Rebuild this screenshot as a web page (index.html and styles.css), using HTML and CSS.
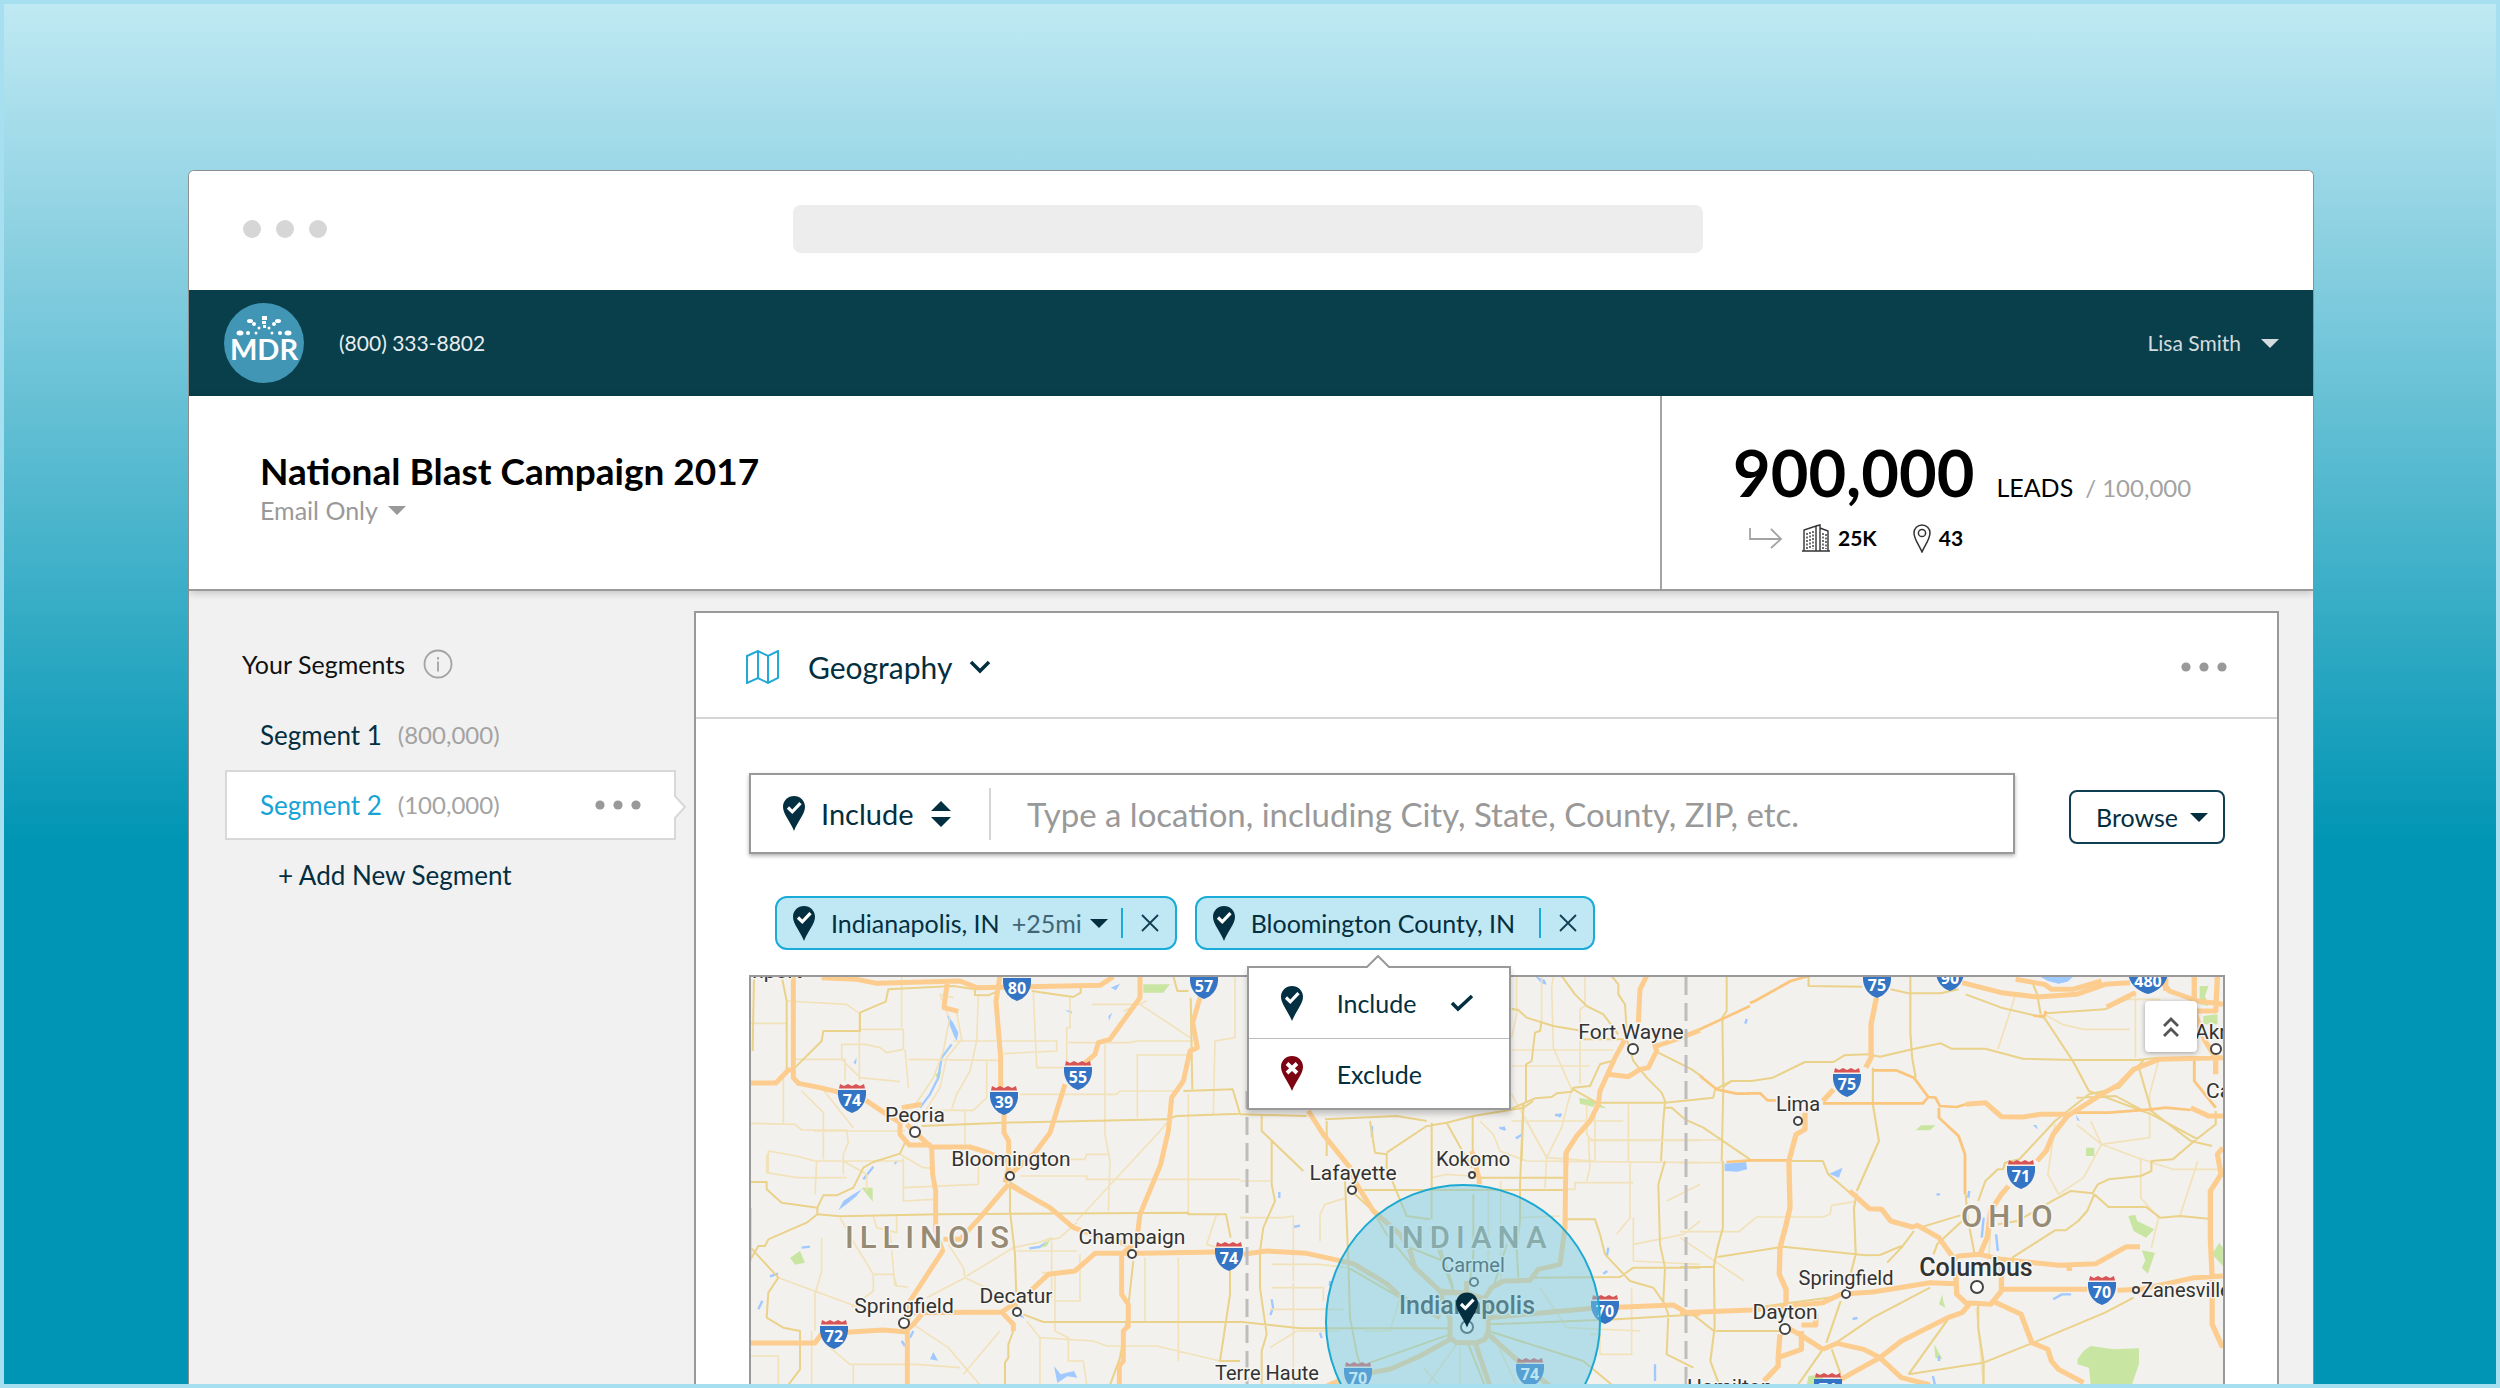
FILE: index.html
```html
<!DOCTYPE html>
<html lang="en">
<head>
<meta charset="utf-8">
<meta name="viewport" content="width=device-width, initial-scale=1">
<title>National Blast Campaign 2017</title>
<link rel="stylesheet" href="styles.css">
</head>
<body>
<svg class="sprite" aria-hidden="true">
  <symbol id="caret" viewBox="0 0 18 9"><path d="M0 0h18L9 9z" fill="currentColor"/></symbol>
  <symbol id="dots" viewBox="0 0 46 10"><g fill="#999"><circle cx="5" cy="5" r="4.6"/><circle cx="23" cy="5" r="4.6"/><circle cx="41" cy="5" r="4.6"/></g></symbol>
  <symbol id="pin" viewBox="0 0 22 35"><path d="M11 0C5 0 0 4.700 0 10.800 0 18 7 25 11 35 15 25 22 18 22 10.800 22 4.700 17 0 11 0z" fill="#032f41"/><path d="M5 11.500l4.300 4.300 8.200-8.600" fill="none" stroke="#fff" stroke-width="3.200"/></symbol>
  <symbol id="pin-x" viewBox="0 0 22 35"><path d="M11 0C5 0 0 4.700 0 10.800 0 18 7 25 11 35 15 25 22 18 22 10.800 22 4.700 17 0 11 0z" fill="#7d0312"/><path d="M6 7.500l10 9.500M16 7.500L6 17" fill="none" stroke="#fff" stroke-width="3.800"/></symbol>
  <symbol id="close" viewBox="0 0 18 18"><path d="M1 1l16 16M17 1L1 17" fill="none" stroke="#0f3f52" stroke-width="1.800"/></symbol>
  <symbol id="shield" viewBox="0 0 28 29"><path d="M2 0L6 2 10 0 14 2 18 0 22 2 26 0 27 4.500H1z" fill="#d85455"/><path d="M0 6h28c1 12-5 20-14 23C5 26-1 18 0 6z" fill="#3374c4"/></symbol>
</svg>

<div class="page">
  <div class="window">
    <div class="chrome">
      <div class="lights"><span></span><span></span><span></span></div>
      <div class="address"></div>
    </div>

    <header class="topbar">
      <a class="logo" href="#" aria-label="MDR home">
        <svg viewBox="0 0 80 80" width="80" height="80">
          <circle cx="40" cy="40" r="40" fill="#4196b6"/>
          <g fill="#fff">
            <rect x="38" y="13" width="5" height="4"/><rect x="38" y="18" width="4" height="3"/><rect x="39" y="22" width="3" height="3"/>
            <ellipse cx="26" cy="18" rx="3" ry="2"/><circle cx="30" cy="21" r="2"/><circle cx="35" cy="25" r="1.500"/>
            <ellipse cx="54" cy="18" rx="3" ry="2"/><circle cx="50" cy="21" r="2"/><circle cx="45" cy="25" r="1.500"/>
            <ellipse cx="16" cy="30" rx="3.500" ry="2.500"/><circle cx="24" cy="30" r="2"/><circle cx="32" cy="30" r="1.500"/>
            <ellipse cx="64" cy="30" rx="3.500" ry="2.500"/><circle cx="56" cy="30" r="2"/><circle cx="48" cy="30" r="1.500"/>
            <text class="logo-text" x="40" y="57">MDR</text>
          </g>
        </svg>
      </a>
      <a class="phone" href="tel:8003338802">(800) 333-8802</a>
      <button class="user" type="button">Lisa Smith <svg class="caret"><use href="#caret"/></svg></button>
    </header>

    <section class="summary">
      <div class="campaign">
        <h1>National Blast Campaign 2017</h1>
        <label class="channel">
          <select aria-label="Channel"><option>Email Only</option></select>
          <svg class="caret"><use href="#caret"/></svg>
        </label>
      </div>
      <div class="leads">
        <p class="total"><strong>900,000</strong><span class="unit">LEADS</span><span class="cap">/ 100,000</span></p>
        <p class="breakdown">
          <svg class="into" viewBox="0 0 34 22" width="34" height="22"><path d="M1 1v11h31M22 2l10 10-10 9" fill="none" stroke="#a3a3a3" stroke-width="1.800"/></svg>
          <svg viewBox="0 0 28 28" width="28" height="28"><g fill="none" stroke="#333" stroke-width="1.400"><path d="M0 27h28M2 27V6l12-4v25M14 2l4-1v3M18 4l8 3v20M18 4v23"/><path d="M5 9v16M8 8v17M11 7v18M21 9v16M24 10v15" stroke-dasharray="2 1.500"/></g></svg>
          <b>25K</b>
          <svg class="place" viewBox="0 0 18 29" width="18" height="29"><path d="M9 1C4.500 1 1 4.500 1 9c0 6 5 12 8 19 3-7 8-13 8-19 0-4.500-3.500-8-8-8z" fill="none" stroke="#333" stroke-width="1.500"/><circle cx="9" cy="9" r="3.600" fill="none" stroke="#333" stroke-width="1.500"/></svg>
          <b>43</b>
        </p>
      </div>
    </section>

    <main class="workspace">
      <aside class="segments">
        <h2>Your Segments
          <svg viewBox="0 0 30 30" width="30" height="30"><circle cx="15" cy="15" r="13.500" fill="none" stroke="#a3a3a3" stroke-width="1.800"/><path d="M15 12.500v10M15 8v2.500" stroke="#a3a3a3" stroke-width="1.800"/></svg>
        </h2>
        <ul>
          <li class="segment"><a href="#">Segment 1</a><span>(800,000)</span></li>
          <li class="segment current"><a href="#">Segment 2</a><span>(100,000)</span>
            <button class="more" type="button" aria-label="Segment options"><svg class="dots"><use href="#dots"/></svg></button>
            <svg class="notch" viewBox="0 0 13 26" width="13" height="26"><path d="M0 1l11 12L0 25" fill="#fff" stroke="#d8d8d8" stroke-width="2"/></svg>
          </li>
        </ul>
        <button class="add" type="button">+ Add New Segment</button>
      </aside>

      <section class="panel">
        <header class="panel-head">
          <svg viewBox="0 0 34 34" width="34" height="34"><path d="M1 6l11-5 10 5 10-5v27l-10 5-10-5-11 5zM12 1v27M22 6v27" fill="none" stroke="#22a9d8" stroke-width="2"/></svg>
          <button class="topic" type="button">Geography
            <svg viewBox="0 0 22 14" width="22" height="14"><path d="M2 2l9 9 9-9" fill="none" stroke="#032f41" stroke-width="3.500"/></svg>
          </button>
          <button class="more" type="button" aria-label="Panel options"><svg class="dots"><use href="#dots"/></svg></button>
        </header>

        <div class="panel-body">
          <form class="search-row">
            <div class="search">
              <label class="mode">
                <svg class="pin"><use href="#pin"/></svg>
                <select aria-label="Include or exclude"><option>Include</option><option>Exclude</option></select>
                <svg viewBox="0 0 20 26" width="20" height="26"><path d="M0 10L10 0l10 10zM0 16h20L10 26z" fill="#032f41"/></svg>
              </label>
              <input type="text" aria-label="Location" placeholder="Type a location, including City, State, County, ZIP, etc.">
            </div>
            <button class="browse" type="button">Browse <svg class="caret"><use href="#caret"/></svg></button>
          </form>

          <div class="chips">
            <div class="chip">
              <svg class="pin"><use href="#pin"/></svg>
              <span class="name">Indianapolis, IN</span>
              <label class="radius"><select aria-label="Radius"><option>+25mi</option></select><svg class="caret"><use href="#caret"/></svg></label>
              <button class="remove" type="button" aria-label="Remove Indianapolis, IN"><svg width="18" height="18"><use href="#close"/></svg></button>
            </div>
            <div class="chip">
              <svg class="pin"><use href="#pin"/></svg>
              <span class="name wide">Bloomington County, IN</span>
              <button class="remove" type="button" aria-label="Remove Bloomington County, IN"><svg width="18" height="18"><use href="#close"/></svg></button>
              <div class="menu">
                <svg class="tip" viewBox="0 0 26 13" width="26" height="13"><path d="M1 13L13 1l12 12" fill="#fff" stroke="#999" stroke-width="2"/></svg>
                <button type="button"><svg class="pin"><use href="#pin"/></svg><span>Include</span><svg viewBox="0 0 24 18" width="24" height="18"><path d="M2 9l6 6L22 2" fill="none" stroke="#032f41" stroke-width="3.500"/></svg></button>
                <button type="button"><svg class="pin"><use href="#pin-x"/></svg><span>Exclude</span></button>
              </div>
            </div>
          </div>

          <div class="map">
            <svg class="tiles" viewBox="751 976 1472 408" preserveAspectRatio="xMidYMin slice" role="img" aria-label="Map of Illinois, Indiana and Ohio">
              <g transform="translate(740 960) scale(.33333)">
                <path class="green" d="M365 680h33v42zM150 890l30-20 15 35-30 6zM1210 70h80l-20 25h-60zM585 340l20-10-10 30z"/>
                <path class="lake" d="M620 160l20 25 15 30-5 25-8-15-12-30zM295 748l15-28 30-20 25-15-15 20-30 25zM1112 80l28-12-12 20zM1105 165l12-10-10 24zM975 148l20 2v8zM340 305l10-15-2 20zM570 1195l10-22 14 26zM462 605l14-8-10 14zM942 1215l20 25 40-10 10 20-30-4-30 20zM840 1055l14 18-14-6z"/>
                <path class="river" d="M635 250L605 290 595 350 570 400 540 440M370 655l30-38M868 862l30-4 20-12M185 860l25-3M90 946l24-8M55 1045l12-26M510 1130l10-20M485 1140l10 15"/>
                <path class="green" d="M900 860l35-32-15 28z"/>
                <path class="minor" d="M32 187H140M140 120L320 130L355 155M360 205H490V265L440 275L420 260L375 250H305V295L360 350L480 362M485 45V200M165 295H315V360M358 155V360M505 295L780 298M495 265L505 380M32 487L165 490L185 507H320L325 545L310 580V640M220 510H495M130 350V490M245 380L340 500M185 390L250 455V595M640 240H950V270L790 278M715 105L710 240L690 330L650 400L635 445M880 95L890 320H985M985 245H1170L1190 240H1360M990 110V200H980V310M1055 130H1200L1350 230M1150 150L1220 120M840 400H1130L1140 390H1320M1192 280V470M1190 282H1345M1095 250V520L1110 600L1105 750M740 300V410L700 448H560M675 450V550M840 645L1040 645V655H1500M880 595H1035L1040 580H1110M1280 485L1260 510L1010 780M80 580V635L170 650H320M85 635V570L170 585L225 600H490M230 600L225 700M310 600L380 640V690M480 580L550 620L580 622M715 600V670L490 680V720L580 715M490 590V680M300 770L345 850L400 940V990L335 1040M115 950L250 1000L360 1040M245 830V930L225 1000V1110M400 765L410 800L470 815V765M400 940H460L470 975L505 978M450 815L465 975M625 850L670 920L675 950L560 1010M675 950L780 1000M880 850L935 830V1010M680 945L820 860L960 830L1010 785M830 870H1010M905 935H1000M1020 880V1020H945M945 930V1110L985 1130V1200H1030L1040 1272M520 1090L625 1160L720 1272M860 1080L900 1130V1272M900 1130L1060 1140L1100 1155H1250L1440 1200M670 1240L780 1110M270 1160L330 1210H530L660 1220M340 1210V1272M215 1110V1272M32 1185H115V1272M1215 890V1080M1315 890V1200M1485 45V230L1425 240L1420 460M1345 400V755M1430 760L1400 850L1500 880M625 165L600 100 640 110M630 165L610 270 580 350 520 440M650 155L665 235 620 290 600 380 550 460"/>
                <path class="road" d="M42 45L38 270M125 45L140 120V340M165 320L245 240L250 210H360V155L437 122L445 85L640 75L705 85M545 495L790 485L1280 475L1310 465L1500 458M32 663H80V685L125 725L232 740L250 703H290L340 680L370 620L400 603L480 578L495 545M232 738V760L300 766L600 760L1345 755V760H1458L1472 830M232 760L200 785L85 835L75 855H55L32 895M32 860L115 950L85 995L80 1070L130 1100L180 1110V1225L145 1272M32 740V900M810 670V750L825 880L830 1040M850 1060L910 1083H1500M820 1110L805 1150V1190L795 1205V1272M1180 900L1160 1080L1140 1190L1110 1272M1470 930V1000L1440 1200H1500M1300 45L1312 90H1345M1352 110L1357 385M1330 390L1478 385L1500 458M705 85V102L745 103L775 90M875 90L1000 108L1022 95V80M805 660L930 740"/>
                <path class="highway" d="M32 366H108L145 327H160M160 45V350L175 367L240 380L290 392L330 410M378 418L440 460L480 485V520L508 552H575M545 430L485 440M500 490L575 560M245 50L350 55L410 67L660 60L710 80L1080 73L1120 47M622 62L612 140L655 151M780 45L768 120L782 290V380M792 455V515L806 540V620L795 665M575 558H690L745 575L800 600M575 560L578 640L587 690V810L608 870L510 1020L502 1090V1272M805 670L720 770L660 835H610M805 670L930 740L1000 800L1060 820L1160 850M1200 45V110L1110 235L1075 245L1065 280L1030 310M975 370L930 515L885 575L810 640M1380 110L1358 185L1372 260L1350 270L1330 360L1295 410L1285 510L1262 610L1200 760L1190 840L1145 880V1000L1165 1030V1095L1150 1110V1200L1138 1215V1272M1425 873L1210 877H1065L1005 930L925 940L850 1010L785 1053L520 1055M785 1053L820 1090V1110M32 1146H225L245 1118L430 1107L495 1112L520 1090L545 1060"/>
              </g>
              <g transform="translate(1490 960) scale(.33333)">
                <path class="green" d="M268 410l40 8 42 24-50-6-30-8z"/>
                <path class="lake" d="M135 45l30 12 5 14-16-4zM195 462l20-6-4 14zM28 500l16-4 4 12zM75 530l22-12-14 16z"/>
                <path class="minor" d="M65 267H370M65 315H300M155 45V180M190 45L185 80L190 260L225 340L245 385L230 440L215 500L170 590M285 45V135L270 145V370M80 45V160L65 230M65 400L120 500L170 590L310 600M415 430V600M65 480H400M290 430V520L305 537H700M315 430V600"/>
                <path class="road" d="M65 143L85 147L110 170L190 195L265 208L280 235H400M215 45L255 100L290 135L340 160L385 220M365 45L385 70V100L405 130L412 240L430 300L470 350L515 395L525 420L520 480 513 600M65 443L135 412L185 408L200 397L245 392L250 380L300 375L330 310L365 300M250 385L320 425H525L670 410L675 385L725 360H780M505 275L605 325L640 350M525 440H545L585 475L640 500L780 595M710 45V150L697 170L700 380L695 600M100 430L95 600M108 425V310L125 300L135 215L150 210L155 180"/>
                <path class="primary" d="M545 240L630 205L780 135M630 345L680 385L740 398H780"/>
                <path class="highway" d="M470 45L450 85L445 185M405 235L375 290L330 390L325 430L300 480L260 525L228 575V610M355 340L415 347L450 325L475 320L500 270L490 240M500 255L545 240L630 208"/>
              </g>
              <g transform="translate(1240 1100) scale(.33333)">
                <path class="river" d="M396 75v32M118 273v18M160 378l20-4M95 595l4 25-8 22M240 695l5 16M1105 440l-4 24M1090 518l12-8M1245 790v50M270 540v15M778 80l18 6M828 112l20-12M945 42l20 0"/>
                <path class="minor" d="M0 240H90M0 350H130L160 345V540M240 420V340L255 310L320 290M95 490H240L320 500M90 625H310M160 545V860M95 560H250V600M720 60L760 100L780 150L860 180L1380 185M1050 118H1380M860 60L920 170L915 260M975 265H1005V245H1180M1045 110L1050 200L1040 240M1170 180V350L1130 400M1180 350V480L1380 490M1180 430L1330 400L1380 360M575 230L620 220L690 225M782 240V540M840 350L960 345M745 260V480M1175 560V760H1080V700H1050M1380 250L1280 300M90 740L170 690H300M550 800L600 855M480 590L450 690H370M900 560L980 680L1200 690M650 730L560 855M660 740V855M760 700L830 855"/>
                <path class="road" d="M0 40L200 45M255 55L470 45L560 60M65 40V90L190 210M95 115V250L105 300L70 380L60 450V560L80 700L65 750V855M0 662L180 682H630M390 60L405 155L440 160V200L500 345L570 355M440 155L560 75L620 65L700 45L850 20 880 0M620 65L695 200M575 65V355M698 45V190M700 280V460L690 540M715 230H970M370 267H970M850 10L840 250V360L830 440L835 530M315 240L325 480L330 650L350 755L360 790M340 275L410 340M325 500L480 590M750 670L1130 655L1380 640M745 690L1030 780L1120 855M630 700L390 785M685 730L735 855M870 530L1140 528L1180 500H1380M980 355H1065L1080 400L1095 460L1170 540L1240 560L1275 610M1275 180L1255 250L1260 430L1275 500L1270 600L1285 640L1280 760L1360 800M260 60V165M410 350L440 400 530 510M570 380L640 570M600 440L640 560M800 430L760 560M510 440L610 480 640 560"/>
                <path class="highway" d="M205 30L250 100L330 200L350 250L400 330L480 400L510 450L525 500L600 570L660 575M10 460L80 450 200 457L340 488L440 548L480 585L600 650M978 155L975 380L960 490L895 505L870 538L790 540L755 560L735 590M600 575L630 655V710L650 725H710L735 715L745 690V650L735 595L680 575ZM745 650L1060 622L1300 612L1345 638H1380M630 715L540 765L450 805L390 815M300 838L260 855M745 700L840 785L930 855M705 725L750 855M680 540V575M695 150L718 235V250"/>
              </g>
              <g transform="translate(1680 960) scale(.35714 .33333)">
                <path class="green" d="M660 508l15-15h40l-15 15zM1137 560h23v25h-23zM1255 765l20-3 5 18 48 25-23 25-35-20zM1293 868l37 7-20 63-17-18 10-22zM1113 1195l17-25 20-15 65 10 70-3v48l-20 62h-115l-5-52-32-10zM1455 75h25l-10 30 10 30-25-5zM1465 165l40-5v30h-40zM1490 880l20-35 10 15v55zM712 1150l23 45-20-5zM735 1000l-10 30 18 10-6-20zM360 1245l40-5v30h-45z"/>
                <path class="lake" d="M125 608l60-5 3 22-28 7-35-2zM418 638l37-18-10 30zM1010 48h90l-15 14-25 6-30-8zM988 492l14 14-4-14zM1108 460l12 20-8-2z"/>
                <path class="river" d="M850 770l-5 60M885 820l5 50M1045 1015l25-15 25 0M810 690l-3 20M718 700h10M483 1074l14-3M183 188l4-14M708 1245l6 27M725 1185v15"/>
                <path class="minor" d="M0 605H120M0 812H165L215 768H400L420 760L425 733L490 722M0 830L180 960M940 100L890 265M1020 160L1070 190L1130 205H1260M1275 90V290M1240 115H1345M1340 300L1315 400V530L1180 550L1110 490M1180 550L1130 650L1060 700L1030 640L1050 490M1150 480L1180 550L1280 590L1380 625H1510M1290 590V710L1340 770L1320 860M1400 765L1450 600M830 1040L850 1272M870 800L865 880"/>
                <path class="road" d="M120 600L120 800L105 860L95 915L97 1100L85 1200L110 1272M120 378L145 360H200L260 350L350 303H430L460 283L525 280L560 287L650 265L730 247L760 263H855L960 293L1100 297H1280L1340 290M645 45V215L650 290L660 350M540 320V430L557 540L495 690M360 45V75L510 77M590 85L640 97H730L780 85M800 100L900 140L1020 170L1100 300L1145 390L1320 460L1450 535M1010 160L1000 100L985 60M1025 157L1190 145L1260 110M305 600H400L415 640L470 690L495 700L487 740L492 880L475 950M105 888L290 857L520 883L560 882L620 855M0 918H95M580 905L620 860L655 810M680 797L785 763M710 880L720 850L790 780M835 720L855 660L890 625H905L910 605L950 595L1050 480L1145 400L1230 380L1300 295M890 790L945 780L1050 715L1095 690L1155 697L1170 670L1200 655L1290 645L1320 630V600L1380 595L1440 540L1500 490V450M1160 700L1140 750L1115 780L1080 808H1050L930 890M1160 700L1200 738H1305L1345 770L1400 765L1480 773M800 700L805 770L825 880M100 1110H290M35 1060L95 1110M410 1145L450 1020M410 1165L540 1070L700 980M835 1030V1100L850 1205V1272M640 1240L850 1205L990 1145L1190 1055L1270 1010M750 1075L640 1240M425 1165L450 1240M400 1165L330 1272M210 1040L450 1005M1285 320L1320 450L1430 540L1490 555M1110 410L1220 405 1290 445"/>
                <path class="primary" d="M196 126L210 120L310 60L360 45M190 397H225L245 418H270M400 427H680L695 408L655 350L605 328H540M695 408L715 410L728 435L775 438L800 430M725 440V470L780 525L798 580V700M1100 455H1200L1320 445L1360 440L1430 447M130 603L200 598H300M990 165H1020L1025 150M1440 290V360L1500 440"/>
                <path class="highway" d="M550 110L535 190V290L520 320M430 385L400 420M350 455V505L325 520L305 600L308 740L295 800L280 860L278 940L297 985V1040M0 1055L200 1047L400 1025L450 1000L540 993L700 965L770 968M900 985H1140M1225 988L1290 985L1440 950L1520 945M770 890L780 885L840 880L900 895V990L870 1030L800 1025L775 1000ZM900 895L1060 913L1165 908L1250 857H1288M1090 910V930M765 890L725 830L665 793L650 798L590 780L565 745L530 743L475 690M840 880L860 830L870 750L900 700L920 675M1000 600L1025 570L1045 520L1085 465L1180 400L1230 370L1270 325L1340 295L1520 290M1085 460H1010L960 468L900 467L855 425L800 430M790 65L900 95L1000 108L1110 100L1190 70L1260 65M1195 138L1275 95M940 55L1020 70L1040 85H1100L1180 60M810 1030L790 1055L750 1070L620 1140L560 1190L450 1255M400 1165L440 1147L515 1165L560 1190L620 1250L700 1272M875 1020L955 1060L985 1145L1030 1165L1040 1200L1060 1225L1130 1265M300 1100L335 1120L400 1165M340 1110V1165L275 1190V1215L235 1260M275 1190L280 1120M340 1092H380V1060M1520 560L1505 580L1515 640L1485 690V830L1490 950V1090L1520 1160M1340 50L1370 90L1450 120L1520 130M1440 45V150L1470 240L1500 290V340M1505 45L1500 150H1440M1430 440L1480 465H1520M1360 90V50"/>
              </g>
              <path class="border" d="M1247 1090V1384M1686 976V1384"/>

              <g class="town">
                <circle cx="915" cy="1131" r="5"/><circle cx="1010" cy="1175" r="4"/><circle cx="1132" cy="1253" r="4"/><circle cx="1017" cy="1311" r="4"/><circle cx="904" cy="1322" r="5"/>
                <circle cx="1352" cy="1189" r="4"/><circle cx="1472" cy="1174" r="3"/><circle cx="1474" cy="1281" r="4"/><circle cx="1467" cy="1326" r="6"/><circle cx="1633" cy="1048" r="5"/>
                <circle cx="1798" cy="1120" r="4"/><circle cx="1785" cy="1328" r="5"/><circle cx="1846" cy="1293" r="4"/><circle cx="1977" cy="1286" r="6"/><circle cx="2136" cy="1289" r="3"/><circle cx="2216" cy="1048" r="5"/>
              </g>
              <g class="state">
                <text x="845" y="1247">ILLINOIS</text>
                <text x="1387" y="1247">INDIANA</text>
                <text x="1961" y="1226">OHIO</text>
              </g>
              <g class="city">
                <text x="802" y="977" text-anchor="end">Davenport</text>
                <g text-anchor="middle">
                  <text x="915" y="1121">Peoria</text>
                  <text x="1011" y="1165">Bloomington</text>
                  <text x="1132" y="1243">Champaign</text>
                  <text x="1016" y="1302">Decatur</text>
                  <text x="904" y="1312">Springfield</text>
                  <text x="1353" y="1179">Lafayette</text>
                  <text class="small" x="1473" y="1165">Kokomo</text>
                  <text class="small" x="1473" y="1271">Carmel</text>
                  <text x="1631" y="1038">Fort Wayne</text>
                  <text class="small" x="1798" y="1110">Lima</text>
                  <text x="1785" y="1318">Dayton</text>
                  <text class="small" x="1846" y="1284">Springfield</text>
                  <text class="capital" x="1467" y="1313">Indianapolis</text>
                  <text class="capital" x="1976" y="1275">Columbus</text>
                </g>
                <text class="small" x="1215" y="1379">Terre Haute</text>
                <text class="small" x="2141" y="1296">Zanesville</text>
                <text x="2195" y="1038">Akron</text>
                <text x="2206" y="1097">Canton</text>
                <text x="1687" y="1393">Hamilton</text>
              </g>
              <g class="route">
                <use href="#shield" x="838" y="1083" width="28" height="29"/><text x="852" y="1105">74</text>
                <use href="#shield" x="990" y="1085" width="28" height="29"/><text x="1004" y="1107">39</text>
                <use href="#shield" x="1064" y="1060" width="28" height="29"/><text x="1078" y="1082">55</text>
                <use href="#shield" x="1003" y="971" width="28" height="29"/><text x="1017" y="993">80</text>
                <use href="#shield" x="1190" y="969" width="28" height="29"/><text x="1204" y="991">57</text>
                <use href="#shield" x="1215" y="1241" width="28" height="29"/><text x="1229" y="1263">74</text>
                <use href="#shield" x="820" y="1319" width="28" height="29"/><text x="834" y="1341">72</text>
                <use href="#shield" x="1344" y="1361" width="28" height="29"/><text x="1358" y="1383">70</text>
                <use href="#shield" x="1516" y="1357" width="28" height="29"/><text x="1530" y="1379">74</text>
                <use href="#shield" x="1591" y="1294" width="28" height="29"/><text x="1605" y="1316">70</text>
                <use href="#shield" x="1863" y="968" width="28" height="29"/><text x="1877" y="990">75</text>
                <use href="#shield" x="1833" y="1067" width="28" height="29"/><text x="1847" y="1089">75</text>
                <use href="#shield" x="1936" y="961" width="28" height="29"/><text x="1950" y="983">90</text>
                <path d="M2128 970h40c0 12-9 20-20 23-11-3-20-11-20-23z" fill="#3374c4"/><text x="2148" y="986">480</text>
                <use href="#shield" x="2007" y="1159" width="28" height="29"/><text x="2021" y="1181">71</text>
                <use href="#shield" x="2088" y="1275" width="28" height="29"/><text x="2102" y="1297">70</text>
                <use href="#shield" x="1814" y="1372" width="28" height="29"/><text x="1828" y="1394">71</text>
              </g>
              <circle class="reach" cx="1463" cy="1321" r="137"/>
              <use href="#pin" x="1456" y="1291" width="22" height="36"/>
            </svg>
            <button class="collapse" type="button" aria-label="Collapse map">
              <svg viewBox="0 0 18 22" width="18" height="22"><path d="M2 10l7-7 7 7M2 20l7-7 7 7" fill="none" stroke="#555" stroke-width="2.800"/></svg>
            </button>
          </div>
        </div>
      </section>
    </main>
  </div>
</div>
</body>
</html>
```
FILE: styles.css
```css
* { box-sizing: border-box; }

body {
  margin: 0;
  font-family: Lato, "Open Sans", sans-serif;
  font-size: 25px;
  line-height: 30px;
  color: #032f41;
}

h1, h2, p, ul { margin: 0; padding: 0; }
ul { list-style: none; }
a { color: inherit; text-decoration: none; }
svg { display: block; flex: none; }

button, select, input {
  margin: 0;
  padding: 0;
  border: 0;
  background: none;
  font: inherit;
  color: inherit;
}
select { appearance: none; }

.sprite { position: absolute; width: 0; height: 0; }
.caret { width: 18px; height: 9px; }
.dots { width: 46px; height: 10px; }
.pin { width: 22px; height: 35px; }

.page {
  display: flex;
  flex-direction: column;
  min-height: 100vh;
  padding: 166px 182px 0 184px;
  border: 4px solid #a5dff0;
  background: linear-gradient(#bfe9f3 0, #94d4e4 200px, #0095b4 840px);
}

.window {
  flex: 1;
  display: flex;
  flex-direction: column;
  border: 1px solid #8f8f8f;
  border-bottom: 0;
  border-radius: 6px 6px 0 0;
  background: #f1f1f1;
  overflow: hidden;
}

/* Browser chrome */
.chrome {
  display: grid;
  grid-template-columns: 1fr 43% 1fr;
  align-items: center;
  height: 119px;
  padding: 0 6px 4px 0;
  background: #fff;
}
.lights { display: flex; gap: 15px; padding-left: 54px; }
.lights span { width: 18px; height: 18px; border-radius: 50%; background: #d6d6d6; }
.address { height: 48px; border-radius: 8px; background: #ededed; }

/* Top bar */
.topbar {
  display: flex;
  align-items: center;
  height: 106px;
  padding: 0 34px 0 35px;
  background: #083f4b;
  color: #e8eef0;
  font-size: 21px;
}
.logo-text {
  font-family: Lato, sans-serif;
  font-size: 29px;
  font-weight: 700;
  text-anchor: middle;
}
.phone { margin-left: 35px; }
.user { display: flex; align-items: center; gap: 20px; margin-left: auto; color: #d5dcde; }

/* Campaign summary */
.summary {
  position: relative;
  display: flex;
  height: 195px;
  border-bottom: 2px solid #9a9a9a;
  background: #fff;
  box-shadow: 0 2px 8px rgba(0, 0, 0, .2);
}
.campaign { flex: 1; padding: 51px 0 0 71px; }
.campaign h1 { font-size: 37px; line-height: 48px; font-weight: 700; color: #000; }
.channel { display: flex; align-items: center; gap: 10px; color: #999; }
.leads {
  width: 653px;
  padding: 41px 0 0 71px;
  border-left: 2px solid #a3a3a3;
  color: #000;
}
.total { display: flex; align-items: baseline; line-height: 70px; }
.total strong { font-size: 65px; }
.unit { margin-left: 22px; }
.cap { margin-left: 12px; color: #a3a3a3; font-size: 24px; }
.breakdown { display: flex; align-items: center; gap: 8px; padding-left: 16px; font-size: 21px; }
.into { margin-right: 11px; }
.place { margin-left: 28px; }

/* Segments */
.workspace { flex: 1; display: flex; }
.segments { width: 505px; padding: 37px 18px 0 36px; font-size: 26px; }
.segments h2 {
  display: flex;
  align-items: center;
  gap: 18px;
  height: 72px;
  padding-left: 17px;
  font-size: 25px;
  font-weight: 400;
  color: #111;
}
.segment {
  position: relative;
  display: flex;
  align-items: center;
  gap: 16px;
  height: 70px;
  padding: 0 33px;
  border: 2px solid transparent;
}
.segment span { color: #a3a3a3; font-size: 24px; }
.current { border-color: #d8d8d8; background: #fff; }
.current a { color: #16a3d6; }
.more { margin-left: auto; }
.notch { position: absolute; right: -13px; top: 22px; }
.add { height: 70px; padding-left: 53px; }

/* Geography panel */
.panel {
  flex: 1;
  display: flex;
  flex-direction: column;
  margin: 20px 34px 0 0;
  border: 2px solid #999;
  border-bottom: 0;
  background: #fff;
}
.panel-head {
  display: flex;
  align-items: center;
  height: 106px;
  padding: 4px 50px 0;
  border-bottom: 2px solid #d5d5d5;
}
.topic { display: flex; align-items: center; gap: 17px; margin-left: 28px; font-size: 30px; }
.panel-body { flex: 1; display: flex; flex-direction: column; padding: 54px 52px 0 53px; }

.search-row { display: flex; align-items: flex-end; gap: 54px; }
.search {
  flex: 1;
  display: flex;
  align-items: center;
  height: 81px;
  border: 2px solid #999;
  box-shadow: 0 2px 4px rgba(0, 0, 0, .3);
}
.mode {
  display: flex;
  align-items: center;
  height: 52px;
  padding: 0 38px 0 32px;
  border-right: 2px solid #d5d5d5;
  font-size: 29px;
}
.mode select { width: 110px; height: 40px; margin-left: 16px; }
.search input { flex: 1; height: 60px; padding-left: 36px; font-size: 33px; outline: 0; }
.search input::placeholder { color: #999; opacity: 1; }
.browse {
  display: flex;
  align-items: center;
  gap: 12px;
  width: 156px;
  height: 54px;
  margin-bottom: 10px;
  padding-left: 25px;
  border: 2px solid #0f3f52;
  border-radius: 8px;
}

.chips { display: flex; gap: 18px; margin-top: 42px; padding-left: 26px; }
.chip {
  position: relative;
  display: flex;
  align-items: center;
  height: 54px;
  padding: 0 16px;
  border: 2px solid #19acd8;
  border-radius: 12px;
  background: #bfe7f4;
}
.name { margin-left: 16px; }
.wide { margin-right: 11px; }
.radius { display: flex; align-items: center; gap: 7px; margin-left: 12px; color: #032f41; }
.radius select { color: #3f6675; }
.remove { height: 30px; margin-left: 13px; padding-left: 18px; border-left: 2px solid #19acd8; }

.menu {
  position: absolute;
  z-index: 2;
  top: 68px;
  left: 50px;
  width: 264px;
  border: 2px solid #999;
  background: #fff;
  box-shadow: 0 4px 6px rgba(0, 0, 0, .2);
}
.menu button { display: flex; align-items: center; gap: 34px; width: 100%; height: 70px; padding-left: 32px; }
.menu button + button { border-top: 1px solid #bbb; }
.tip { position: absolute; left: 116px; top: -13px; }

/* Map */
.map {
  position: relative;
  flex: 1;
  min-height: 400px;
  margin-top: 25px;
  border: 2px solid #999;
  border-bottom: 0;
  background: #f3f1ee;
  overflow: hidden;
}
.tiles { position: absolute; width: 100%; height: 100%; }
.collapse {
  position: absolute;
  top: 24px;
  right: 26px;
  display: grid;
  place-items: center;
  width: 52px;
  height: 51px;
  border-radius: 4px;
  background: #fff;
  box-shadow: 0 1px 5px rgba(0, 0, 0, .35);
}

.minor, .road, .primary, .highway, .river { fill: none; stroke-linejoin: round; }
.minor { stroke: #f2e2ba; stroke-width: 5; }
.road { stroke: #ead28a; stroke-width: 6; }
.primary { stroke: #fac57c; stroke-width: 8; }
.highway { stroke: #fccd8f; stroke-width: 15; }
.river { stroke: #a0c9ff; stroke-width: 7; }
.lake { fill: #a0c9ff; }
.green { fill: #c9e5a2; }
.border { fill: none; stroke: #bdbdbd; stroke-width: 3; stroke-dasharray: 18 8; }
.town circle { fill: #fff; stroke: #444; stroke-width: 2; }
.city text, .state text {
  font-family: Roboto, sans-serif;
  paint-order: stroke;
  stroke: #f8f6f2;
  stroke-width: 3;
  stroke-linejoin: round;
}
.city text { font-size: 21px; fill: #333; }
.city .small { font-size: 20px; }
.city .capital { font-size: 25px; font-weight: 500; }
.state text { font-size: 31px; font-weight: 500; letter-spacing: 6px; fill: #968b75; }
.route text { font-family: "Open Sans", sans-serif; font-size: 16px; font-weight: 700; text-anchor: middle; fill: #fff; }
.reach { fill: rgba(122, 204, 226, .5); stroke: #1da9d2; stroke-width: 2; }
```
